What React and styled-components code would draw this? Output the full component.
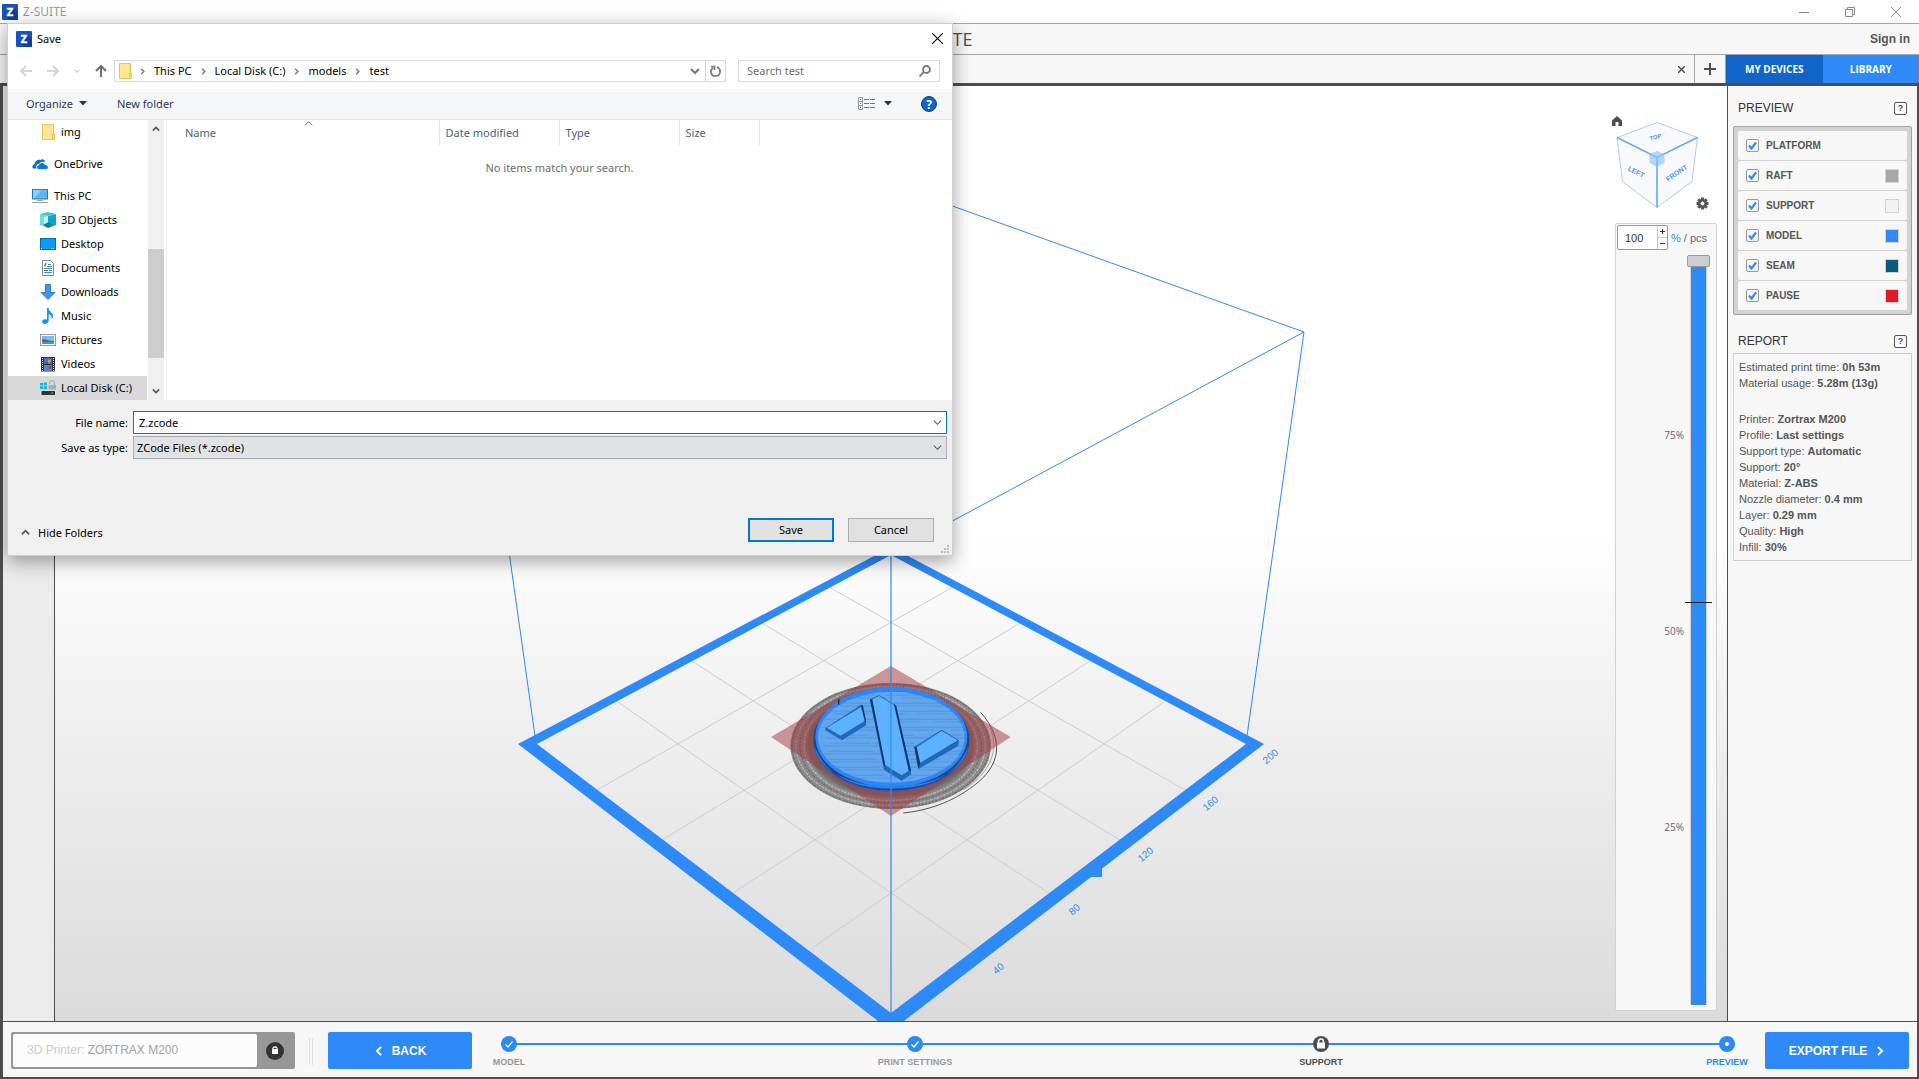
import React, { useState } from 'react'
import styled, { createGlobalStyle } from 'styled-components'

const BLUE = '#2d8af8';
const DARK = '#4d4d4d';
const UI_FONT = '"Noto Sans", "Open Sans", sans-serif';
const TITLE_FONT = '"Open Sans", "Noto Sans", sans-serif';

const GlobalStyle = createGlobalStyle`
* {
    box-sizing: border-box;
}
body {
    margin: 0;
    background: #fff;
    font-family: "Liberation Sans", Arial, sans-serif;
}
button, input, select {
    font: inherit;
    color: inherit;
    margin: 0;
    padding: 0;
}
svg {
    display: block;
    flex: none;
}
`;

const Shell = styled.div`
display: flex;
flex-direction: column;
height: 100vh;
min-height: 700px;
position: relative;
`;

/* ---------- main window ---------- */

const TitleBar = styled.div`
display: flex;
align-items: center;
flex: none;
gap: 5px;
height: 24px;
padding-left: 2px;
background: #fff;
border-bottom: 1px solid #a6a6a6;
color: #999;
font-family: ${UI_FONT};
font-size: 12px;
`;
const WindowButtons = styled.div`
display: flex;
align-items: center;
margin-left: auto;
`;
const WindowButton = styled.button`
display: flex;
align-items: center;
justify-content: center;
width: 46px;
height: 20px;
border: 0;
background: none;
`;
const Header = styled.header`
display: flex;
align-items: center;
justify-content: center;
flex: none;
position: relative;
height: 31px;
padding-right: 38px;
background: #f7f7f7;
border-bottom: 1px solid #a6a6a6;
color: ${DARK};
h1 {
    margin: 0;
    font: 400 18px ${TITLE_FONT};
}
`;
const SignIn = styled.a`
position: absolute;
right: 9px;
color: #555;
font-size: 12px;
font-weight: 700;
text-decoration: none;
`;
const TabStrip = styled.div`
display: flex;
flex: none;
height: 28px;
background: #f7f7f7;
`;
const ModelTab = styled.div`
display: flex;
flex: 1;
align-items: center;
justify-content: flex-end;
padding-right: 7px;
`;
const IconButton = styled.button`
display: flex;
align-items: center;
justify-content: center;
width: ${p => p.$size || 12}px;
height: ${p => p.$size || 12}px;
border: 0;
background: none;
`;
const AddTab = styled.button`
display: flex;
align-items: center;
justify-content: center;
width: 32px;
border: solid #a6a6a6;
border-width: 0 1px;
background: #f7f7f7;
`;
const DeviceTabs = styled.div`
display: flex;
width: 193px;
`;
const DeviceTab = styled.button`
flex: 1;
border: 0;
background: ${p => p.$active ? '#1165c9' : BLUE};
color: #fff;
font-family: ${TITLE_FONT};
font-size: 10px;
font-weight: 700;
`;
const Workspace = styled.div`
display: flex;
flex: 1;
flex-direction: column;
min-height: 0;
border: solid ${DARK};
border-width: 3px 2px 2px 3px;
`;
const Middle = styled.main`
display: flex;
flex: 1;
min-height: 0;
`;
const Rail = styled.div`
width: 52px;
background: #ebebeb;
border-right: 1px solid ${DARK};
`;
const Viewport = styled.section`
display: flex;
flex: 1;
justify-content: flex-end;
position: relative;
overflow: hidden;
padding: 24px 10px 10px;
background: linear-gradient(#fff 0%, #fff 48%, #f2f2f2 64%, #dbdbdb 100%);
`;
const SceneSvg = styled.svg`
position: absolute;
inset: 0;
width: 100%;
height: 100%;
`;
const ViewTools = styled.div`
display: flex;
flex-direction: column;
align-items: flex-end;
gap: 9px;
min-height: 0;
position: relative;
`;

/* ---------- layer slider ---------- */

const SliderPanel = styled.div`
display: flex;
flex: 1;
flex-direction: column;
min-height: 0;
width: 102px;
padding: 1px;
background: #f7f7f7;
border: 1px solid #d2d2d2;
border-radius: 2px;
`;
const ScaleRow = styled.div`
display: flex;
align-items: center;
gap: 3px;
color: #666;
font-size: 11px;
b {
    color: ${BLUE};
    font-weight: 400;
}
`;
const Spinner = styled.div`
display: flex;
width: 51px;
height: 25px;
background: #fff;
border: 1px solid #999;
border-radius: 2px;
input {
    width: 39px;
    padding-left: 7px;
    border: 0;
    background: none;
    color: #333;
    font-size: 11px;
    outline: none;
}
`;
const SpinButtons = styled.div`
display: flex;
flex: 1;
flex-direction: column;
border-left: 1px solid #ccc;
button {
    display: flex;
    flex: 1;
    align-items: center;
    justify-content: center;
    border: 0;
    background: none;
}
button + button {
    border-top: 1px solid #ccc;
}
`;
const SliderBody = styled.div`
display: flex;
flex: 1;
justify-content: flex-end;
min-height: 0;
padding: 5px 5px 4px 0;
`;
const Marks = styled.div`
display: flex;
flex-direction: column;
justify-content: space-between;
padding: 170px 3px 168px 0;
color: #666;
font-family: ${TITLE_FONT};
font-size: 10px;
line-height: 20px;
`;
const Track = styled.div`
display: flex;
position: relative;
width: 23px;
`;
const LayerRange = styled.input`
appearance: none;
writing-mode: vertical-lr;
direction: rtl;
width: 23px;
height: 100%;
background: linear-gradient(90deg, transparent 3px, #d2d2d2 3px, #d2d2d2 4px, ${BLUE} 4px, ${BLUE} 19px, #d2d2d2 19px, #d2d2d2 20px, transparent 20px);
outline: none;
&::-webkit-slider-thumb {
    appearance: none;
    width: 23px;
    height: 12px;
    background: #cdced0;
    border: 1px solid #999;
    border-radius: 2px;
}
`;
const Marker = styled.div`
position: absolute;
left: -2px;
right: -2px;
height: 1px;
background: #222;
`;

/* ---------- right panel ---------- */

const Panel = styled.aside`
display: flex;
flex-direction: column;
width: 190px;
padding: 10px 5px;
background: #f7f7f7;
border-left: 1px solid ${DARK};
`;
const PanelHeading = styled.div`
display: flex;
align-items: center;
justify-content: space-between;
height: 24px;
padding: 0 5px;
h2 {
    margin: 0;
    color: #333;
    font-size: 12px;
    font-weight: 400;
}
`;
const HelpButton = styled.button`
width: 13px;
height: 13px;
border: 1px solid #555;
border-radius: 2px;
background: none;
color: #555;
font-size: 9px;
font-weight: 700;
line-height: 11px;
`;
const LayerList = styled.div`
display: flex;
flex-direction: column;
gap: 1px;
margin: 6px 0 14px;
padding: 4px;
background: #d3d3d3;
border: 1px solid #a3a3a3;
border-radius: 2px;
`;
const LayerRow = styled.label`
display: flex;
align-items: center;
height: 29px;
padding: 0 8px;
background: #f7f7f7;
border-radius: 2px;
color: #555;
font-size: 10px;
font-weight: 700;
`;
const Check = styled.span`
display: grid;
width: 13px;
height: 13px;
margin-right: 7px;
input, svg {
    grid-area: 1 / 1;
}
input {
    appearance: none;
    width: 13px;
    height: 13px;
    border: 1px solid #999;
    border-radius: 2px;
    background: #f7f7f7;
}
input:not(:checked) + svg {
    visibility: hidden;
}
svg {
    pointer-events: none;
}
`;
const Swatch = styled.span`
width: 14px;
height: 14px;
margin-left: auto;
background: ${p => p.$color};
border: 1px solid #d3d3d3;
`;
const Report = styled.div`
padding: 5px;
border: 1px solid #d0d0d0;
color: #555;
font-size: 11px;
line-height: 16px;
p {
    margin: 0;
}
p:nth-child(2) {
    margin-bottom: 20px;
}
`;

/* ---------- bottom bar ---------- */

const Footer = styled.footer`
display: flex;
flex: none;
height: 56px;
padding: 10px 8px 8px;
background: #f7f7f7;
border-top: 1px solid ${DARK};
`;
const PrinterBox = styled.div`
display: flex;
align-items: center;
justify-content: space-between;
width: 284px;
padding: 2px;
background: #979797;
border-radius: 2px;
font-size: 12px;
button {
    display: flex;
    justify-content: center;
    width: 36px;
    border: 0;
    background: none;
}
`;
const PrinterName = styled.div`
flex: 1;
align-self: stretch;
padding-left: 14px;
background: #fcfcfc;
border-radius: 2px;
color: #a3a3a3;
line-height: 32px;
span {
    color: #ccc;
}
`;
const Grip = styled.div`
width: 4px;
margin: 6px 15px 4px 14px;
border: solid #dde2e8;
border-width: 0 1px;
`;
const BlueButton = styled.button`
display: flex;
align-items: center;
justify-content: center;
gap: 8px;
width: 144px;
background: ${BLUE};
border: 0;
border-radius: 2px;
color: #fff;
font-size: 12px;
font-weight: 700;
`;
const Stepper = styled.nav`
display: flex;
flex: 1;
justify-content: space-between;
margin: 4px 30px 0 29px;
background: linear-gradient(${BLUE}, ${BLUE}) 0 7px / 100% 2px no-repeat;
`;
const Step = styled.a`
display: flex;
flex-direction: column;
align-items: center;
gap: 4px;
width: 16px;
color: ${p => p.$color};
font-size: 9px;
font-weight: 700;
line-height: 12px;
text-decoration: none;
white-space: nowrap;
`;

/* ---------- save dialog ---------- */

const Dialog = styled.form`
display: flex;
flex-direction: column;
position: absolute;
top: 23px;
left: 7px;
width: 946px;
background: #f0f0f0;
border: 1px solid #cfcfcf;
box-shadow: 0 5px 18px rgba(0,0,0,0.38);
color: #000;
font-family: ${UI_FONT};
font-size: 11px;
`;
const DialogTitle = styled.div`
display: flex;
align-items: center;
gap: 5px;
height: 29px;
padding: 0 5px 0 8px;
background: #fff;
button {
    margin-left: auto;
}
`;
const NavRow = styled.div`
display: flex;
align-items: center;
height: 36px;
padding: 0 12px;
background: #fff;
`;
const NavButtons = styled.div`
display: flex;
align-items: center;
justify-content: space-between;
width: 87px;
margin-right: 7px;
`;
const AddressBar = styled.div`
display: flex;
align-items: center;
flex: 1;
height: 22px;
padding-left: 2px;
border: 1px solid #d9d9d9;
a {
    color: #000;
    text-decoration: none;
    margin: 0 8px;
    padding-bottom: 2px;
}
svg + svg {
    margin-left: 6px;
}
`;
const AddressEnd = styled.div`
display: flex;
align-items: center;
height: 20px;
margin-left: auto;
button {
    height: 20px;
    width: 20px;
}
button + button {
    border-left: 1px solid #d9d9d9;
}
`;
const SearchBox = styled.div`
display: flex;
align-items: center;
width: 202px;
height: 22px;
margin-left: 12px;
padding: 0 8px;
border: 1px solid #d9d9d9;
input {
    flex: 1;
    min-width: 0;
    padding-bottom: 2px;
    border: 0;
    outline: none;
}
input::placeholder {
    color: #6d6d6d;
    opacity: 1;
}
`;
const DialogToolbar = styled.div`
display: flex;
align-items: center;
height: 31px;
padding: 0 15px 1px 18px;
background: #f5f6f7;
border-bottom: 1px solid #e8e8e9;
color: #1e395b;
`;
const ToolButton = styled.button`
display: flex;
align-items: center;
gap: ${p => p.$gap || 6}px;
margin-right: ${p => p.$after || 0}px;
border: 0;
background: none;
`;
const PushRight = styled.div`
display: flex;
align-items: center;
margin-left: auto;
`;
const Browser = styled.div`
display: flex;
height: 280px;
background: #fff;
`;
const Tree = styled.div`
width: 139px;
`;
const TreeItem = styled.a`
display: flex;
align-items: center;
gap: ${p => p.$top ? 6 : 5}px;
height: 24px;
margin-bottom: ${p => p.$gap ? 8 : 0}px;
padding-left: ${p => p.$top ? 24 : 32}px;
background: ${p => p.$selected ? '#d9d9d9' : 'none'};
color: #000;
text-decoration: none;
span {
    padding-bottom: 2px;
}
`;
const ScrollBar = styled.div`
display: flex;
flex-direction: column;
align-items: center;
width: 16px;
margin: 0 2px 0 1px;
padding: 5px 0;
background: #f0f0f0;
`;
const ScrollThumb = styled.div`
width: 16px;
height: 109px;
margin: 116px 0 auto;
background: #cdcdcd;
`;
const FileList = styled.div`
flex: 1;
border-left: 1px solid #f2f2f2;
color: #6d6d6d;
text-align: center;
`;
const FileTable = styled.table`
border-collapse: collapse;
table-layout: fixed;
width: 592px;
margin-bottom: 15px;
color: #4c607a;
text-align: left;
th {
    height: 25px;
    padding: 0 0 0 6px;
    border-right: 1px solid #e2e2e2;
    font-weight: 400;
    vertical-align: middle;
}
th:first-child {
    padding-left: 18px;
}
`;
const NameHead = styled.div`
display: flex;
align-items: center;
svg {
    align-self: flex-start;
    margin: -6px 0 0 88px;
}
`;
const Fields = styled.div`
display: grid;
grid-template-columns: 120px 1fr;
gap: 2px 5px;
padding: 11px 5px 0 0;
align-items: center;
label {
    text-align: right;
}
`;
const Combo = styled.div`
display: flex;
align-items: center;
height: 23px;
padding-right: 4px;
background: ${p => p.$active ? '#fff' : '#e1e2e4'};
border: 1px solid ${p => p.$active ? '#0078d7' : '#a5abb3'};
input, select {
    appearance: none;
    flex: 1;
    height: 21px;
    padding-left: ${p => p.$active ? 5 : 3}px;
    border: 0;
    background: none;
    outline: none;
}
`;
const DialogFooter = styled.div`
display: flex;
align-items: center;
gap: 14px;
height: 24px;
margin: 59px 18px 13px 13px;
`;
const HideFolders = styled.button`
display: flex;
align-items: center;
gap: 8px;
margin: 4px auto 0 0;
border: 0;
background: none;
`;
const PushButton = styled.button`
width: 86px;
height: 24px;
padding-bottom: 1px;
background: #e1e1e1;
border: ${p => p.$primary ? '2px solid #0078d7' : '1px solid #adadad'};
`;
const ResizeGrip = styled.svg`
position: absolute;
right: 3px;
bottom: 2px;
`;

/* ---------- icons ---------- */

const AppIcon = () => (
    <svg width="16" height="16" viewBox="0 0 16 16">
        <rect width="16" height="16" rx="1" fill="#1b50bd" />
        <path d="M12 4 L16 8 V16 H8 L4 12 Z" fill="#123f9b" />
        <text x="8" y="12" fontSize="11" fontWeight="700" textAnchor="middle" fill="#fff" stroke="#fff" strokeWidth=".5">Z</text>
    </svg>
)

const Chevron = ({ dir = 'down', size = 9, width = 2, color = '#555' }) => {
    const turn = { down: 0, left: 90, up: 180, right: 270 }[dir];
    return (
        <svg width={size} height={size} viewBox="0 0 10 10">
            <path d="M1 3 L5 7 L9 3" fill="none" stroke={color} strokeWidth={width} transform={`rotate(${turn} 5 5)`} />
        </svg>
    )
}

const Arrow = ({ dir, color }) => (
    <svg width="12" height="12" viewBox="0 0 12 12">
        <path d="M12 6 H1 M6 1 L1 6 L6 11" fill="none" stroke={color} strokeWidth="2"
            transform={`rotate(${{ left: 0, up: 90, right: 180 }[dir]} 6 6)`} />
    </svg>
)

const Cross = ({ size = 10, color = '#000', width = 1 }) => (
    <svg width={size} height={size} viewBox="0 0 10 10">
        <path d="M0 0 L10 10 M10 0 L0 10" stroke={color} strokeWidth={width} />
    </svg>
)

const Caret = () => (
    <svg width="8" height="5" viewBox="0 0 8 5"><path d="M0 0 H8 L4 4.5 Z" fill="#1e395b" /></svg>
)

const FolderIcon = () => (
    <svg width="16" height="16" viewBox="0 0 16 16">
        <path d="M2.5 .5 H13.5 V10 H14.5 V15.5 H2.5 Z" fill="#ffe69a" stroke="#e8c34a" />
        <path d="M12.5 15 V10.5 H14" fill="none" stroke="#e8b93c" />
    </svg>
)

const treeIcons = {
    folder: <FolderIcon />,
    cloud: (
        <svg width="16" height="16" viewBox="0 0 16 16">
            <path d="M1 12.5 C-.5 10.5 1 8.5 2.5 8.3 C3 5 6 3 8.5 4 C10 2.5 13 3.5 13.2 6 C9 5 7.5 6.5 7 8 C5 7.5 3.8 9.5 4.5 12.5 Z" fill="#0f6fc6" />
            <path d="M6.5 13 C4.6 13 4.5 9.5 7 9.2 C7.5 6.5 12 6 13 9 C16.5 8.8 16.5 13 14.5 13 Z" fill="#0078d7" />
        </svg>
    ),
    pc: (
        <svg width="16" height="16" viewBox="0 0 16 16">
            <rect x=".5" y="1.5" width="15" height="9.5" fill="#5ab8f7" stroke="#2d7bb5" />
            <path d="M1 11 L10 2 H1 Z" fill="#8dd0fb" />
            <path d="M5 12.5 H11 M0 14.5 H16" stroke="#90a4b3" strokeWidth="1.2" />
        </svg>
    ),
    cube: (
        <svg width="16" height="16" viewBox="0 0 16 16">
            <path d="M0 2 L8 4 V16 L0 13 Z" fill="#72dcdc" />
            <path d="M16 2 L8 4 V16 L16 13 Z" fill="#0aa7c4" />
            <path d="M0 2 L8 0 L16 2 L8 4 Z" fill="#3ec4d0" />
            <path d="M3 13 L8 10.5 L13 13 L8 16 Z" fill="#107c92" />
            <path d="M4 5 L8 4 V10 L4 12 Z" fill="#c8f5f2" />
        </svg>
    ),
    desktop: (
        <svg width="16" height="16" viewBox="0 0 16 16">
            <rect x=".5" y="2.5" width="15" height="11" fill="#0a9bff" stroke="#0867a8" />
            <path d="M1 12.5 H3 M11 12.5 H15" stroke="#fff" strokeDasharray="1 1" />
        </svg>
    ),
    doc: (
        <svg width="16" height="16" viewBox="0 0 16 16">
            <path d="M2.5 .5 H10.5 L13.5 3.5 V15.5 H2.5 Z" fill="#fff" stroke="#8a8a8a" />
            <path d="M8 4.5 H11 M7 6.5 H12 M4 8.5 H12 M9 10.5 H12 M4 12.5 H12" stroke="#3e93cf" />
            <path d="M4 10.5 H8" stroke="#5a7d5a" /><path d="M4.5 6.5 L6 3" stroke="#2785c7" strokeWidth="1.5" />
        </svg>
    ),
    download: (
        <svg width="16" height="16" viewBox="0 0 16 16">
            <path d="M5.5 .5 H10.5 V8.5 H15 L8 15.5 L1 8.5 H5.5 Z" fill="#3d97e5" stroke="#2b80cc" />
        </svg>
    ),
    music: (
        <svg width="16" height="16" viewBox="0 0 16 16">
            <path d="M7 0 H8.5 C9 4 13 4.5 13 8 C13 9.5 12.5 10.5 11.5 11 C12 8 10.5 6.5 8.7 6 V12.5 C8.5 15 6.5 16 4.5 15.9 C1 15.5 1.5 11.5 5 11.3 L7 11.5 Z" fill="#0a96f5" />
        </svg>
    ),
    picture: (
        <svg width="16" height="16" viewBox="0 0 16 16">
            <rect x=".5" y="2.5" width="15" height="11" fill="#fff" stroke="#999" />
            <rect x="2" y="4" width="12" height="8" fill="#79bdf0" />
            <path d="M2 7 C6 7 9 9 14 9 V10 H2 Z" fill="#3a7d6b" />
            <path d="M2 10 H14 V12 H2 Z" fill="#5b8fb8" />
        </svg>
    ),
    video: (
        <svg width="16" height="16" viewBox="0 0 16 16">
            <rect x="1" y="1" width="14" height="14.5" fill="#333" />
            <rect x="4" y="2" width="8" height="6" fill="#4274cf" />
            <rect x="4" y="9" width="8" height="6" fill="#4d86dc" />
            <path d="M2.5 2 V15 M13.5 2 V15" stroke="#eee" strokeDasharray="1 1" />
            <path d="M7 6 L9 3 L11 5 L9 7 Z" fill="#e3a621" /><path d="M5 8 L8 5 V8 Z M8 12 L11 10 V13 Z" fill="#a3352c" />
        </svg>
    ),
    disk: (
        <svg width="16" height="16" viewBox="0 0 16 16">
            <path d="M0 3 H3 V5.5 H0 Z M3.7 2.5 H7 V5.5 H3.7 Z M0 6.2 H3 V9 H0 Z M3.7 6.2 H7 V9.2 H3.7 Z" fill="#14b4ea" />
            <path d="M9.5 4 C9.5 -.5 14.5 -.5 14.5 3 V5" fill="none" stroke="#a9b5bd" strokeWidth="1.3" />
            <rect x="8.5" y="5" width="7.5" height="4.5" fill="#9fb2bd" />
            <rect x="1.5" y="11" width="13.5" height="4" rx=".5" fill="#333" />
            <rect x="11" y="12.5" width="2" height="1" fill="#4be04b" />
        </svg>
    ),
};

const Gear = ({ x, y }) => (
    <g transform={`translate(${x} ${y})`}>
        {[0, 45, 90, 135].map(a => (
            <rect key={a} x="-1.5" y="-6" width="3" height="12" fill="#555" transform={`rotate(${a})`} />
        ))}
        <circle r="3.2" fill="#f9f9f9" stroke="#555" strokeWidth="2.6" />
    </g>
)

// orientation cube shown above the slider
const ViewCube = () => (
    <svg width="105" height="104" viewBox="1612 110 105 104">
        <g fill="#f8f9fb" stroke="#a9cffa" strokeWidth="1">
            <path d="M1657 122.5 L1697.5 137.5 L1657 157.5 L1617 137.5 Z" />
            <path d="M1617 137.5 L1657 157.5 V207.5 L1622.5 181.5 Z" />
            <path d="M1697.5 137.5 L1657 157.5 V207.5 L1692 181.5 Z" />
        </g>
        <path d="M1617 137.5 L1657 157.5 L1697.5 137.5 M1657 157.5 V207.5" fill="none" stroke="#6aaaf5" strokeWidth="1.5" />
        <path d="M1657 151 L1664.5 154.5 V163 L1657 167 L1649.5 163 V154.5 Z" fill="#8fc0fa" opacity=".65" />
        <g fill="#4c96ee" fontWeight="700" textAnchor="middle">
            <text fontSize="7" transform="translate(1635 174) rotate(28)">LEFT</text>
            <text fontSize="7" transform="translate(1678 175) rotate(-34)">FRONT</text>
            <text fontSize="6" transform="translate(1656 139) rotate(-16)">TOP</text>
        </g>
        <g transform="translate(1612 116)">
            <path d="M5 0 L10 4.5 V10 H6.5 V6 H3.5 V10 H0 V4.5 Z" fill="#4d4d4d" />
        </g>
        <Gear x={1702.5} y={203.5} />
    </svg>
)

// grid lines of the build plate: [edge x, edge y, opposite x, opposite y], mirrored round x = 891
const gridLines = [
    [829, 587, 1185, 790],
    [762, 623, 1120, 840],
    [692, 661, 1049, 893],
    [618, 702, 974, 951],
];
const rulerMarks = [
    [40, 998, 968],
    [80, 1074, 909],
    [120, 1145, 854],
    [160, 1210, 803],
    [200, 1270, 756],
];

const Model = () => (
    <g transform="translate(760 640) scale(.33333)">
        <ellipse cx="392" cy="318" rx="301" ry="189" fill="#8c8c8c" />
        {[296, 284, 272, 260].map((r, i) => (
            <ellipse key={r} cx="392" cy="318" rx={r} ry={r * 0.628} fill="none" stroke={i % 2 ? '#b8b8b8' : '#6f6f6f'} strokeWidth="4" strokeDasharray="5 4 9 3" />
        ))}
        <ellipse cx="392" cy="312" rx="252" ry="160" fill="#6e6e6e" stroke="#7d7d7d" strokeWidth="6" />
        <path d="M662 217 C735 300 722 378 640 438 C575 488 500 512 430 519" fill="none" stroke="#555" strokeWidth="3" />
        <path d="M690 262 C720 330 690 400 610 450" fill="none" stroke="#888" strokeWidth="2" />
        <path d="M393 78 L752 291 L393 528 L33 291 Z" fill="#a0383e" opacity=".5" />
        <ellipse cx="394" cy="307" rx="232" ry="148" fill="#52509c" />
        <ellipse cx="394" cy="299" rx="234" ry="152" fill="#174a8d" />
        <path d="M164 320 C190 480 600 480 624 320 C590 410 500 446 394 446 C288 446 198 410 164 320 Z" fill="#2b7ff0" />
        <ellipse cx="394" cy="291" rx="228" ry="150" fill="#2d86f2" />
        <ellipse cx="394" cy="292" rx="220" ry="136" fill="#63a5ea" />
        <clipPath id="disc"><ellipse cx="394" cy="292" rx="225" ry="138" /></clipPath>
        <g clipPath="url(#disc)" strokeWidth="2">
            {Array.from({ length: 34 }, (_, i) => (
                <path key={i} d={`M${170 + (i * 37) % 60} ${158 + i * 8} H620`} stroke={i % 3 ? '#5590d2' : '#5cb0ff'}
                    strokeDasharray={`${90 + (i * 53) % 140} ${12 + (i * 17) % 40}`} />
            ))}
        </g>
        <path d="M236 178 V194" stroke="#0f2b50" strokeWidth="4" />
        <g fill="#2168bd">
            <path d="M196 265 L303 194 L318 243 V256 L246 301 L196 271 Z" />
            <path d="M330 178 L357 165 L408 196 L453 392 V403 L425 422 L372 390 Z" />
            <path d="M463 320 L545 269 L597 301 L594 318 L475 387 Z" />
        </g>
        <g fill="#12396c">
            <path d="M303 194 L309 196 L318 243 L314 247 Z" />
            <path d="M330 178 L337 178 L378 376 L372 380 Z M402 193 L408 196 L453 392 L446 394 Z" />
            <path d="M463 320 L470 322 L481 368 L475 387 Z" />
        </g>
        <g fill="#5cb2ff">
            <path d="M303 201 L314 243 L242 287 L201 263 Z" />
            <path d="M337 178 L357 168 L402 195 L446 392 L425 406 L376 376 Z" />
            <path d="M470 322 L545 273 L593 301 L481 368 Z" />
        </g>
    </g>
)

const Scene = () => (
    <SceneSvg viewBox="55 86 1672 935" preserveAspectRatio="xMidYMid slice">
        <g stroke="#cfcfcf" strokeWidth="1">
            {gridLines.map(([x1, y1, x2, y2]) => (
                <React.Fragment key={x1}>
                    <line x1={x1} y1={y1} x2={x2} y2={y2} />
                    <line x1={1782 - x1} y1={y1} x2={1782 - x2} y2={y2} />
                </React.Fragment>
            ))}
        </g>
        <path fillRule="evenodd" fill={BLUE} d="M518 744 L891 547 L1264 744 L891 1031 Z M537 744 L891 1013 L1246 744 L891 555 Z" />
        <path d="M1102 868 V877 H1088 Z" fill={BLUE} />
        <path d="M478 332 L535 736 M1304 332 L1247 736 M891 184 L1304 332 L891 554" fill="none" stroke={BLUE} />
        <Model />
        <path d="M891 547 V1014" stroke={BLUE} strokeWidth="2" opacity=".6" />
        <g fill={BLUE} fontSize="10" textAnchor="middle">
            {rulerMarks.map(([n, x, y]) => (
                <text key={n} y="4" transform={`translate(${x} ${y}) rotate(-40)`}>{n}</text>
            ))}
        </g>
    </SceneSvg>
)

/* ---------- data ---------- */

const treeItems = [
    { name: 'img', icon: 'folder', gap: true },
    { name: 'OneDrive', icon: 'cloud', top: true, gap: true },
    { name: 'This PC', icon: 'pc', top: true },
    { name: '3D Objects', icon: 'cube' },
    { name: 'Desktop', icon: 'desktop' },
    { name: 'Documents', icon: 'doc' },
    { name: 'Downloads', icon: 'download' },
    { name: 'Music', icon: 'music' },
    { name: 'Pictures', icon: 'picture' },
    { name: 'Videos', icon: 'video' },
    { name: 'Local Disk (C:)', icon: 'disk', selected: true },
];
const layers = [
    ['PLATFORM', null],
    ['RAFT', '#a9a9a9'],
    ['SUPPORT', '#f2f2f2'],
    ['MODEL', '#2d8af8'],
    ['SEAM', '#0b5a82'],
    ['PAUSE', '#e01b22'],
];
const report = [
    ['Estimated print time', '0h 53m'],
    ['Material usage', '5.28m (13g)'],
    ['Printer', 'Zortrax M200'],
    ['Profile', 'Last settings'],
    ['Support type', 'Automatic'],
    ['Support', '20°'],
    ['Material', 'Z-ABS'],
    ['Nozzle diameter', '0.4 mm'],
    ['Layer', '0.29 mm'],
    ['Quality', 'High'],
    ['Infill', '30%'],
];
const steps = [
    ['MODEL', 'done', '#999'],
    ['PRINT SETTINGS', 'done', '#999'],
    ['SUPPORT', 'locked', '#4d4d4d'],
    ['PREVIEW', 'current', BLUE],
];

const StepIcon = ({ state }) => (
    <svg width="16" height="16" viewBox="0 0 16 16">
        <circle cx="8" cy="8" r="8" fill={state === 'locked' ? '#4d4d4d' : BLUE} />
        {state === 'done' && <path d="M4.5 8.5 L7 11 L11.5 5.5" fill="none" stroke="#fff" strokeWidth="1.2" />}
        {state === 'current' && <circle cx="8" cy="8" r="2" fill="#fff" />}
        {state === 'locked' && (
            <>
                <path d="M5.5 7 V5.5 C5.5 2 10.5 2 10.5 5.5 V7" fill="none" stroke="#fff" strokeWidth="1.5" />
                <rect x="4" y="6.5" width="8" height="6" rx=".5" fill="#fff" />
            </>
        )}
    </svg>
)

const SaveDialog = () => {
    const [fileName, setFileName] = useState('Z.zcode');

    return (
        <Dialog onSubmit={e => e.preventDefault()}>
            <DialogTitle>
                <AppIcon />
                Save
                <IconButton type="button" $size={20} aria-label="Close"><Cross size={11} /></IconButton>
            </DialogTitle>
            <NavRow>
                <NavButtons>
                    <Arrow dir="left" color="#d6d6d6" />
                    <Arrow dir="right" color="#d6d6d6" />
                    <Chevron size={6} color="#d0d0d0" />
                    <Arrow dir="up" color="#6e6e6e" />
                </NavButtons>
                <AddressBar>
                    <FolderIcon />
                    <Chevron dir="right" size={7} color="#777" />
                    <a href="#pc">This PC</a>
                    <Chevron dir="right" size={7} color="#777" />
                    <a href="#c">Local Disk (C:)</a>
                    <Chevron dir="right" size={7} color="#777" />
                    <a href="#models">models</a>
                    <Chevron dir="right" size={7} color="#777" />
                    <a href="#test">test</a>
                    <AddressEnd>
                        <IconButton type="button" aria-label="Previous locations"><Chevron size={10} color="#777" /></IconButton>
                        <IconButton type="button" aria-label="Refresh">
                            <svg width="11" height="12" viewBox="0 0 11 12">
                                <path d="M7 2 C12 4.5 10.5 11 5.5 11 C.5 11 -.5 5 3 3 M1 1.5 H4.5 V5" fill="none" stroke="#777" strokeWidth="1.7" />
                            </svg>
                        </IconButton>
                    </AddressEnd>
                </AddressBar>
                <SearchBox>
                    <input type="search" aria-label="Search test" placeholder="Search test" />
                    <svg width="12" height="12" viewBox="0 0 12 12">
                        <circle cx="7.5" cy="4.5" r="3.5" fill="none" stroke="#777" strokeWidth="1.8" />
                        <path d="M5 7 L.5 11.5" stroke="#777" strokeWidth="1.8" />
                    </svg>
                </SearchBox>
            </NavRow>
            <DialogToolbar>
                <ToolButton type="button" $after={30}>Organize <Caret /></ToolButton>
                <ToolButton type="button">New folder</ToolButton>
                <PushRight>
                    <ToolButton type="button" $gap={9} $after={29} aria-label="Change your view">
                        <svg width="17" height="13" viewBox="0 0 17 13">
                            <path d="M.5 .5 H4.5 V12.5 H.5 Z M.5 4.5 H4.5 M.5 8.5 H4.5" fill="#fff" stroke="#999" />
                            <path d="M6 2.5 H17 M6 6.5 H17 M6 10.5 H17" stroke="#777" strokeDasharray="5 1" />
                            <path d="M2 2.5 H3 M2 6.5 H3" stroke="#4a6fb5" /><path d="M2 10.5 H3" stroke="#c03030" />
                        </svg>
                        <Caret />
                    </ToolButton>
                    <ToolButton type="button" aria-label="Help">
                        <svg width="16" height="16" viewBox="0 0 16 16">
                            <circle cx="8" cy="8" r="7.5" fill="#0a66c9" stroke="#1a4476" />
                            <text x="8" y="12.5" fontSize="12" fontWeight="700" textAnchor="middle" fill="#fff">?</text>
                        </svg>
                    </ToolButton>
                </PushRight>
            </DialogToolbar>
            <Browser>
                <Tree>
                    {treeItems.map(item => (
                        <TreeItem key={item.name} href="#folder" $top={item.top} $gap={item.gap} $selected={item.selected}>
                            {treeIcons[item.icon]}
                            <span>{item.name}</span>
                        </TreeItem>
                    ))}
                </Tree>
                <ScrollBar>
                    <Chevron dir="up" size={8} />
                    <ScrollThumb />
                    <Chevron size={8} />
                </ScrollBar>
                <FileList>
                    <FileTable>
                        <colgroup>
                            <col width="272" />
                            <col width="120" />
                            <col width="120" />
                            <col width="80" />
                        </colgroup>
                        <thead>
                            <tr>
                                <th><NameHead>Name <Chevron dir="up" size={9} width={1} /></NameHead></th>
                                <th>Date modified</th>
                                <th>Type</th>
                                <th>Size</th>
                            </tr>
                        </thead>
                    </FileTable>
                    No items match your search.
                </FileList>
            </Browser>
            <Fields>
                <label htmlFor="file-name">File name:</label>
                <Combo $active>
                    <input id="file-name" value={fileName} onChange={e => setFileName(e.target.value)} />
                    <Chevron width={1.2} />
                </Combo>
                <label htmlFor="file-type">Save as type:</label>
                <Combo>
                    <select id="file-type"><option>ZCode Files (*.zcode)</option></select>
                    <Chevron width={1.2} />
                </Combo>
            </Fields>
            <DialogFooter>
                <HideFolders type="button"><Chevron dir="up" size={9} />Hide Folders</HideFolders>
                <PushButton $primary>Save</PushButton>
                <PushButton type="button">Cancel</PushButton>
            </DialogFooter>
            <ResizeGrip width="8" height="8" viewBox="0 0 8 8">
                <path d="M6 0 h2 v2 h-2z M3 3 h2 v2 h-2z M6 3 h2 v2 h-2z M0 6 h2 v2 h-2z M3 6 h2 v2 h-2z M6 6 h2 v2 h-2z" fill="#bfbfbf" />
            </ResizeGrip>
        </Dialog>
    )
}

const LayerSlider = () => {
    const [scale, setScale] = useState(100);
    const [layer, setLayer] = useState(100);
    const markerAt = 46.3;

    return (
        <SliderPanel>
            <ScaleRow>
                <Spinner>
                    <input aria-label="Scale" value={scale} onChange={e => setScale(e.target.value)} />
                    <SpinButtons>
                        <button aria-label="Increase" onClick={() => setScale(Number(scale) + 1)}>
                            <svg width="5" height="5" viewBox="0 0 5 5"><path d="M0 2.5 H5 M2.5 0 V5" stroke="#333" /></svg>
                        </button>
                        <button aria-label="Decrease" onClick={() => setScale(Number(scale) - 1)}>
                            <svg width="5" height="5" viewBox="0 0 5 5"><path d="M0 2.5 H5" stroke="#333" /></svg>
                        </button>
                    </SpinButtons>
                </Spinner>
                <span><b>%</b> / pcs</span>
            </ScaleRow>
            <SliderBody>
                <Marks>
                    <span>75%</span>
                    <span>50%</span>
                    <span>25%</span>
                </Marks>
                <Track>
                    <LayerRange type="range" aria-label="Layer" value={layer} onChange={e => setLayer(e.target.value)} />
                    <Marker style={{ top: `${markerAt}%` }} />
                </Track>
            </SliderBody>
        </SliderPanel>
    )
}

const App = () => (
    <Shell>
        <GlobalStyle />
        <TitleBar>
            <AppIcon />
            Z-SUITE
            <WindowButtons>
                <WindowButton aria-label="Minimize">
                    <svg width="10" height="10" viewBox="0 0 10 10"><path d="M0 5.5 H10" stroke="#888" /></svg>
                </WindowButton>
                <WindowButton aria-label="Restore">
                    <svg width="10" height="10" viewBox="0 0 10 10">
                        <path d="M.5 2.5 H7.5 V9.5 H.5 Z M2.5 2.5 V.5 H9.5 V7.5 H7.5" fill="none" stroke="#888" />
                    </svg>
                </WindowButton>
                <WindowButton aria-label="Close"><Cross color="#888" /></WindowButton>
            </WindowButtons>
        </TitleBar>
        <Header>
            <h1>Z-SUITE</h1>
            <SignIn href="#signin">Sign in</SignIn>
        </Header>
        <TabStrip>
            <ModelTab>
                <IconButton aria-label="Close tab"><Cross size={7} color="#4d4d4d" width={2} /></IconButton>
            </ModelTab>
            <AddTab aria-label="New tab">
                <svg width="12" height="12" viewBox="0 0 12 12"><path d="M0 6 H12 M6 0 V12" stroke="#4d4d4d" strokeWidth="2" /></svg>
            </AddTab>
            <DeviceTabs>
                <DeviceTab $active>MY DEVICES</DeviceTab>
                <DeviceTab>LIBRARY</DeviceTab>
            </DeviceTabs>
        </TabStrip>
        <Workspace>
            <Middle>
                <Rail />
                <Viewport>
                    <Scene />
                    <ViewTools>
                        <ViewCube />
                        <LayerSlider />
                    </ViewTools>
                </Viewport>
                <Panel>
                    <PanelHeading><h2>PREVIEW</h2><HelpButton>?</HelpButton></PanelHeading>
                    <LayerList>
                        {layers.map(([name, color]) => (
                            <LayerRow key={name}>
                                <Check>
                                    <input type="checkbox" defaultChecked />
                                    <svg width="13" height="13" viewBox="0 0 13 13">
                                        <path d="M3 6.5 L5.5 9.5 L10 3.5" fill="none" stroke={BLUE} strokeWidth="2.2" />
                                    </svg>
                                </Check>
                                {name}
                                {color && <Swatch $color={color} />}
                            </LayerRow>
                        ))}
                    </LayerList>
                    <PanelHeading><h2>REPORT</h2><HelpButton>?</HelpButton></PanelHeading>
                    <Report>
                        {report.map(([label, value]) => (
                            <p key={label}>{label}: <b>{value}</b></p>
                        ))}
                    </Report>
                </Panel>
            </Middle>
            <Footer>
                <PrinterBox>
                    <PrinterName><span>3D Printer:</span> ZORTRAX M200</PrinterName>
                    <button aria-label="Printer locked">
                        <svg width="18" height="18" viewBox="0 0 18 18">
                            <circle cx="9" cy="9" r="9" fill="#333" />
                            <path d="M7 8 V6.5 C7 4.5 11 4.5 11 6.5 V8" fill="none" stroke="#fff" strokeWidth="1.3" />
                            <rect x="6" y="7" width="6" height="5" fill="#fff" />
                        </svg>
                    </button>
                </PrinterBox>
                <Grip />
                <BlueButton><Chevron dir="left" size={10} color="#fff" />BACK</BlueButton>
                <Stepper>
                    {steps.map(([name, state, color]) => (
                        <Step key={name} href="#step" $color={color}>
                            <StepIcon state={state} />
                            {name}
                        </Step>
                    ))}
                </Stepper>
                <BlueButton>EXPORT FILE<Chevron dir="right" size={10} color="#fff" /></BlueButton>
            </Footer>
        </Workspace>
        <SaveDialog />
    </Shell>
);

export default App
